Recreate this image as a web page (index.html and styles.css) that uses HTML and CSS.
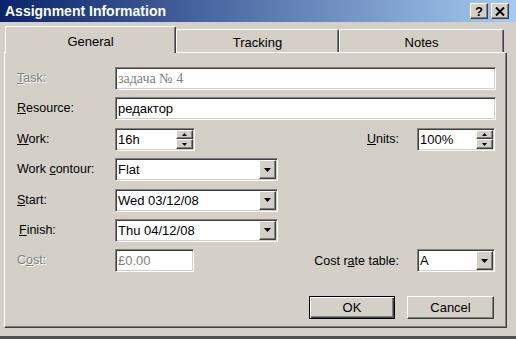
FILE: index.html
```html
<!DOCTYPE html>
<html lang="en">
<head>
    <meta charset="UTF-8">
    <title>Assignment Information</title>
    <link rel="stylesheet" href="styles.css">
</head>
<body>
    <div class="window">
        <div class="titlebar">
            <span class="title">Assignment Information</span>
            <div class="caption-buttons">
                <span class="cap-btn">?</span>
                <span class="cap-btn">
                    <svg width="10" height="9" viewBox="0 0 10 9">
                        <path d="M1 0.5 L9 8.5 M9 0.5 L1 8.5" stroke="#000" stroke-width="2"/>
                    </svg>
                </span>
            </div>
        </div>

        <div class="tabs">
            <div class="tab active tab-general">General</div>
            <div class="tab tab-tracking">Tracking</div>
            <div class="tab tab-notes">Notes</div>
        </div>

        <div class="panel">
            <div class="form">
                <div class="label disabled"><u>T</u>ask:</div>
                <div class="field task-value">задача № 4</div>

                <div class="label"><u>R</u>esource:</div>
                <div class="field">редактор</div>

                <div class="label"><u>W</u>ork:</div>
                <div class="row-inline">
                    <div class="field spin work-spin">
                        <span class="value">16h</span>
                        <div class="spin-btns">
                            <span class="spin-btn"><svg width="5" height="3" viewBox="0 0 5 3"><path d="M2.5 0 L5 3 L0 3 Z" fill="#000"/></svg></span>
                            <span class="spin-btn"><svg width="5" height="3" viewBox="0 0 5 3"><path d="M0 0 L5 0 L2.5 3 Z" fill="#000"/></svg></span>
                        </div>
                    </div>
                    <span class="inline-label"><u>U</u>nits:</span>
                    <div class="field spin units-spin">
                        <span class="value">100%</span>
                        <div class="spin-btns">
                            <span class="spin-btn"><svg width="5" height="3" viewBox="0 0 5 3"><path d="M2.5 0 L5 3 L0 3 Z" fill="#000"/></svg></span>
                            <span class="spin-btn"><svg width="5" height="3" viewBox="0 0 5 3"><path d="M0 0 L5 0 L2.5 3 Z" fill="#000"/></svg></span>
                        </div>
                    </div>
                </div>

                <div class="label">Work <u>c</u>ontour:</div>
                <div class="field combo">
                    <span class="value">Flat</span>
                    <span class="drop"><svg width="7" height="4" viewBox="0 0 7 4"><path d="M0 0 L7 0 L3.5 4 Z" fill="#000"/></svg></span>
                </div>

                <div class="label"><u>S</u>tart:</div>
                <div class="field combo">
                    <span class="value">Wed 03/12/08</span>
                    <span class="drop"><svg width="7" height="4" viewBox="0 0 7 4"><path d="M0 0 L7 0 L3.5 4 Z" fill="#000"/></svg></span>
                </div>

                <div class="label finish"><u>F</u>inish:</div>
                <div class="field combo">
                    <span class="value">Thu 04/12/08</span>
                    <span class="drop"><svg width="7" height="4" viewBox="0 0 7 4"><path d="M0 0 L7 0 L3.5 4 Z" fill="#000"/></svg></span>
                </div>

                <div class="label disabled">C<u>o</u>st:</div>
                <div class="row-inline">
                    <div class="field cost-field">£0.00</div>
                    <span class="inline-label">Cost r<u>a</u>te table:</span>
                    <div class="field combo rate-combo">
                        <span class="value">A</span>
                        <span class="drop"><svg width="7" height="4" viewBox="0 0 7 4"><path d="M0 0 L7 0 L3.5 4 Z" fill="#000"/></svg></span>
                    </div>
                </div>
            </div>

            <div class="actions">
                <button class="btn default">OK</button>
                <button class="btn cancel">Cancel</button>
            </div>
        </div>
    </div>
</body>
</html>
```
FILE: styles.css
```css
body {
    margin: 0;
    background-color: #d4d0c8;
}
.window {
    width: 516px;
    height: 339px;
    box-sizing: border-box;
    background-color: #d4d0c8;
    border-bottom: 3px solid #505050;
    font-family: "Liberation Sans", Arial, sans-serif;
    font-size: 12.5px;
    color: #000;
    overflow: hidden;
}
.titlebar {
    height: 22px;
    display: flex;
    align-items: center;
    padding: 0 7px 0 5px;
    background: linear-gradient(to right, #0a246a, #a6caf0);
}
.title {
    flex: 1;
    color: #fff;
    font-weight: bold;
    font-size: 14px;
}
.caption-buttons {
    display: flex;
    gap: 3px;
}
.cap-btn {
    width: 18px;
    height: 16px;
    box-sizing: border-box;
    display: flex;
    align-items: center;
    justify-content: center;
    background-color: #d4d0c8;
    border: 1px solid;
    border-color: #fff #404040 #404040 #fff;
    box-shadow: inset -1px -1px #808080;
    font-weight: bold;
    font-size: 13px;
}

/* tabs */
.tabs {
    height: 30px;
    display: flex;
    align-items: flex-end;
    padding-left: 5px;
    position: relative;
    z-index: 1;
}
.tab {
    height: 23px;
    box-sizing: border-box;
    display: flex;
    align-items: center;
    justify-content: center;
    padding-top: 2px;
    font-size: 13px;
    border-top: 1px solid #fff;
    border-left: 1px solid #fff;
    border-right: 1px solid #404040;
    box-shadow: inset -1px 0 #808080;
    border-radius: 2px 2px 0 0;
    background-color: #d4d0c8;
}
.tab.active {
    height: 27px;
    margin-bottom: -1px;
}
.tab-general { width: 171px; }
.tab-tracking { width: 163px; }
.tab-notes { width: 165px; }

/* panel */
.panel {
    width: 503px;
    margin-left: 4px;
    box-sizing: border-box;
    border: 1px solid;
    border-color: #fff #404040 #404040 #fff;
    box-shadow: inset -1px -1px #808080;
    padding: 14px 10px 8px 12px;
}
.form {
    display: grid;
    grid-template-columns: 98px 1fr;
    grid-auto-rows: 30.4px;
    align-items: start;
}
.label {
    line-height: 23px;
}
.label.finish {
    padding-left: 2px;
}
.label.disabled {
    color: #808080;
    text-shadow: 1px 1px #fff;
}
.field {
    height: 23px;
    box-sizing: border-box;
    display: flex;
    align-items: center;
    padding: 0 1px 0 2px;
    font-size: 13px;
    background-color: #fff;
    border: 1px solid;
    border-color: #808080 #fff #fff #808080;
    box-shadow: inset 1px 1px #404040, inset -1px -1px #d4d0c8;
}
.task-value {
    font-family: "Liberation Serif", "Times New Roman", serif;
    font-size: 14px;
    color: #808080;
}
.cost-field {
    width: 79px;
    color: #808080;
}
.row-inline {
    display: flex;
    align-items: center;
}
.inline-label {
    margin-left: auto;
    margin-right: 18px;
}
.value {
    flex: 1;
}

/* spin boxes */
.work-spin { width: 80px; }
.units-spin { width: 78px; margin-right: 1px; }
.spin-btns {
    display: flex;
    flex-direction: column;
    width: 17px;
    height: 19px;
}
.spin-btn {
    flex: 1;
    box-sizing: border-box;
    display: flex;
    align-items: center;
    justify-content: center;
    background-color: #d4d0c8;
    border: 1px solid;
    border-color: #fff #404040 #404040 #fff;
    box-shadow: inset -1px -1px #808080;
}

/* combos */
.combo { width: 163px; }
.rate-combo { width: 78px; margin-right: 1px; }
.drop {
    width: 17px;
    height: 19px;
    box-sizing: border-box;
    display: flex;
    align-items: center;
    justify-content: center;
    background-color: #d4d0c8;
    border: 1px solid;
    border-color: #fff #404040 #404040 #fff;
    box-shadow: inset -1px -1px #808080;
}

/* buttons */
.actions {
    display: flex;
    justify-content: flex-end;
    gap: 12px;
    margin-top: 16px;
    padding-right: 2px;
}
.btn {
    width: 86px;
    height: 23px;
    padding: 0;
    box-sizing: border-box;
    font-family: "Liberation Sans", Arial, sans-serif;
    font-size: 13px;
    color: #000;
    background-color: #d4d0c8;
    border: 1px solid;
    border-color: #fff #404040 #404040 #fff;
    box-shadow: inset -1px -1px #808080;
}
.btn.cancel {
    width: 87px;
}
.btn.default {
    border-color: #000;
    box-shadow: inset 1px 1px #fff, inset -1px -1px #404040, inset -2px -2px #808080;
}
```
